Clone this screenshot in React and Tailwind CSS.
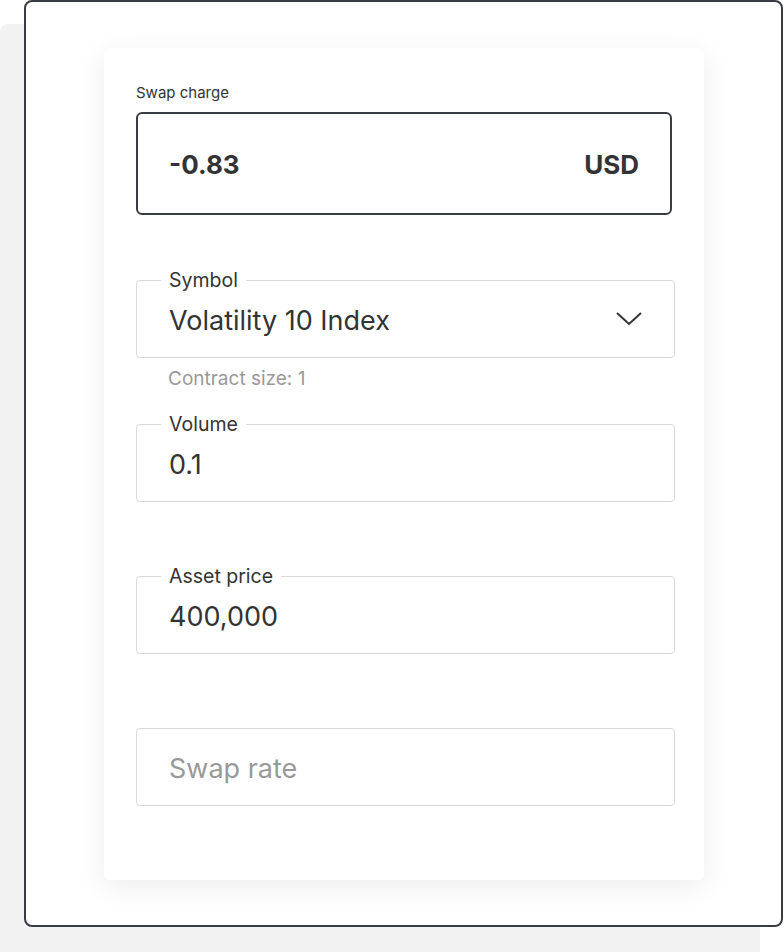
import React from 'react';

function OutlinedField({ label, value, placeholder, children }) {
  return (
    <div className="relative h-[78px] w-[539px] rounded border border-[#d6dadb] flex items-center px-8">
      {label && (
        <span className="absolute left-6 -top-[13px] bg-white px-2 text-[19.5px] leading-6 text-[#333333]">
          {label}
        </span>
      )}
      {value ? (
        <span className="mt-1 text-[27px] leading-8 text-[#333333]">{value}</span>
      ) : (
        <span className="mt-1 text-[27px] leading-8 text-[#999999]">{placeholder}</span>
      )}
      {children}
    </div>
  );
}

export default function App() {
  return (
    <div
      className="relative w-[784px] h-[952px] bg-white overflow-hidden"
      style={{ fontFamily: 'Inter, "Noto Sans", sans-serif' }}
    >
      {/* backdrop */}
      <div className="absolute left-0 top-[24px] w-[760px] h-[940px] rounded-lg bg-[#f2f2f2]" />

      <div className="relative ml-[24px] w-[759px] h-[927px] rounded-lg border-2 border-[#393c45] bg-white pl-[78px] pt-[46px]">
        <div className="w-[600px] h-[832px] rounded-md bg-white shadow-[0_6px_28px_rgba(0,0,0,0.08)] pl-8 pt-[35px]">
          <label className="block text-[15px] leading-5 text-[#333333] mb-[9px]">Swap charge</label>
          <div className="h-[103px] w-[536px] rounded-md border-2 border-[#393c45] flex items-center justify-between px-[31px]">
            <span className="mt-0.5 text-[26px] font-bold text-[#333333]">-0.83</span>
            <span className="mt-0.5 text-[26px] font-bold text-[#333333]">USD</span>
          </div>

          <div className="mt-[65px]">
            <OutlinedField label="Symbol" value="Volatility 10 Index">
              <svg
                className="ml-auto"
                width="26"
                height="16"
                viewBox="0 0 26 16"
                fill="none"
                stroke="#333333"
                strokeWidth="2"
              >
                <path d="M1 2l12 11L25 2" />
              </svg>
            </OutlinedField>
            <p className="pl-8 mt-[9px] text-[19px] leading-6 text-[#999999]">Contract size: 1</p>
          </div>

          <div className="mt-[33px]">
            <OutlinedField label="Volume" value="0.1" />
          </div>

          <div className="mt-[74px]">
            <OutlinedField label="Asset price" value="400,000" />
          </div>

          <div className="mt-[74px]">
            <OutlinedField placeholder="Swap rate" />
          </div>
        </div>
      </div>
    </div>
  );
}
